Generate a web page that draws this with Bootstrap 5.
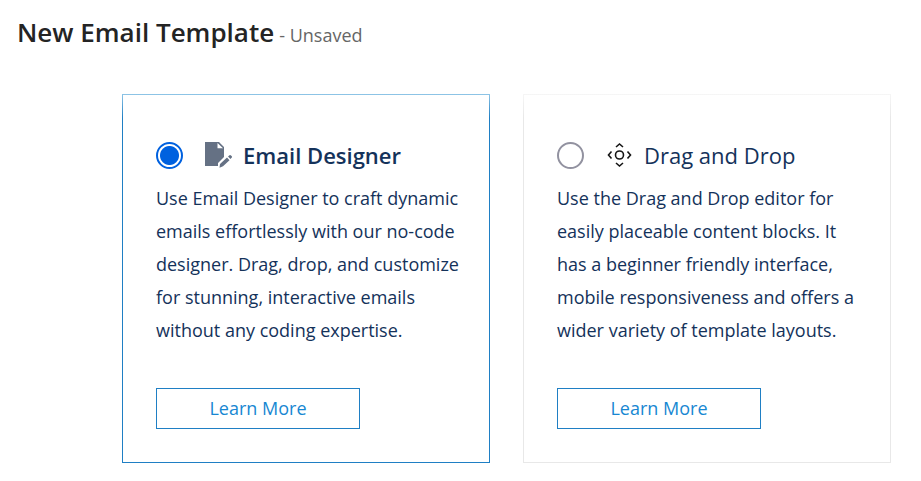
<!DOCTYPE html>
<html lang="en">
<head>
<meta charset="utf-8">
<meta name="viewport" content="width=device-width, initial-scale=1">
<title>New Email Template</title>
<link href="https://cdn.jsdelivr.net/npm/bootstrap@5.3.0/dist/css/bootstrap.min.css" rel="stylesheet">
<style>
  body { font-family: "Open Sans", "Noto Sans", sans-serif; color: #14325a; background: #fff; }
  .page-head { padding: 14px 17px 0; gap: 5px; color: #242424; }
  .page-title { font-size: 26px; line-height: 36px; font-weight: 600; }
  .page-state { font-size: 18px; line-height: 36px; color: #666; }
  .choices { padding: 41px 30px 16px 122px; gap: 33px; }
  .choice { flex: 1 1 0; min-width: 0; padding: 42px 27px 33px 33px; border: 1px solid; border-image: linear-gradient(#f6f6f6, #e8e8e8 24px) 1; }
  .choice.selected { border-image: linear-gradient(#8fc5e6, #1f7fc4 24px) 1; }
  .choice-radio { appearance: none; flex: none; width: 27px; height: 27px; margin: 0; border: 2px solid #9292a0; border-radius: 50%; background: #fff; }
  .choice-radio:checked { border-color: #0061df; background: radial-gradient(circle, #0061df 9px, #fff 10px); }
  .choice-head { height: 36px; }
  .choice-icon { flex: none; width: 28px; height: 28px; margin: 0 11px 0 21px; }
  .choice-name { font-size: 22px; line-height: 36px; }
  .choice-text { font-size: 18px; line-height: 33px; margin: 9px 0 41px; }
  .learn { display: block; width: 204px; height: 41px; padding: 0; font-size: 18px; line-height: 39px; color: #1787d2; border: 1px solid #1f7fc4; border-radius: 0; }
</style>
<script src="https://cdn.jsdelivr.net/npm/bootstrap@5.3.0/dist/js/bootstrap.bundle.min.js"></script>
</head>
<body>
<header class="page-head d-flex align-items-baseline">
  <h1 class="page-title mb-0">New Email Template</h1>
  <span class="page-state">- Unsaved</span>
</header>
<main class="choices d-flex">
  <section class="choice selected">
    <div class="choice-head d-flex align-items-center">
      <input class="choice-radio" type="radio" name="editor" id="designer" checked>
      <label class="d-flex align-items-center" for="designer">
        <svg class="choice-icon" viewBox="0 0 28 28" aria-hidden="true">
          <path fill="#657184" d="M1 1h14l5 5v10l-6 6v3H1z"/>
          <path fill="#fff" d="M13.500 2v5.200H19z"/>
          <path fill="#657184" d="M16 23l7-6.500 2.500 2.800-6.500 6-3.500 1.500zM24 15.500l1.500-1.300q.8-.5 1.500.2l.8.900q.6.700 0 1.300L26.400 18z"/>
        </svg>
        <span class="choice-name fw-semibold">Email Designer</span>
      </label>
    </div>
    <p class="choice-text">Use Email Designer to craft dynamic emails effortlessly with our no-code designer. Drag, drop, and customize for stunning, interactive emails without any coding expertise.</p>
    <button class="btn learn" type="button">Learn More</button>
  </section>
  <section class="choice">
    <div class="choice-head d-flex align-items-center">
      <input class="choice-radio" type="radio" name="editor" id="dragdrop">
      <label class="d-flex align-items-center" for="dragdrop">
        <svg class="choice-icon" viewBox="0 0 28 28" fill="none" stroke="#151515" stroke-width="1.6" aria-hidden="true">
          <circle cx="14.500" cy="14" r="4"/>
          <path d="M11 6l3.500-3L18 6M11 22l3.500 3 3.500-3M6.500 10.500l-3 3.500 3 3.500M22.500 10.500l3 3.500-3 3.500"/>
        </svg>
        <span class="choice-name">Drag and Drop</span>
      </label>
    </div>
    <p class="choice-text">Use the Drag and Drop editor for easily placeable content blocks. It has a beginner friendly interface, mobile responsiveness and offers a wider variety of template layouts.</p>
    <button class="btn learn" type="button">Learn More</button>
  </section>
</main>
</body>
</html>
